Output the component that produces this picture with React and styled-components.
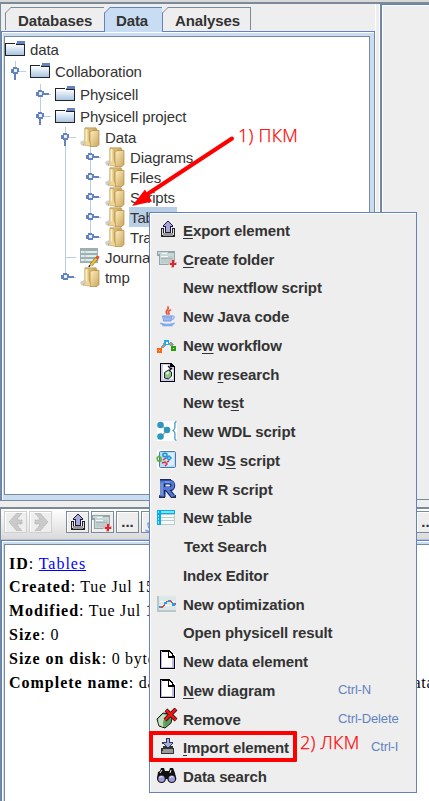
import React from "react";
import styled, { createGlobalStyle } from "styled-components";

const slate = "#7a8a99";
const blue = "#6382bf";
const sky = "#c8ddf2";
const face = "#eeeeee";
const ink = "#333333";

const Global = createGlobalStyle`
  * { box-sizing: border-box; }
  body { margin: 0; overflow: hidden; }
`;

const Window = styled.div`
  position: relative;
  width: 429px;
  height: 801px;
  overflow: hidden;
  display: flex;
  flex-direction: column;
  background: ${face};
  color: ${ink};
  font-family: "Liberation Sans", Arial, sans-serif;
  font-size: 15px;
`;

const TopEdge = styled.div`
  flex: none;
  height: 4px;
  background: #d8d8d8;
  border-bottom: 2px solid ${slate};
`;

const Upper = styled.div`
  flex: none;
  height: 497px;
  display: flex;
`;

const LeftPane = styled.section`
  width: 375px;
  height: 497px;
  border-left: 1px solid ${slate};
  display: flex;
  flex-direction: column;
`;

const TabBar = styled.div`
  height: 28px;
  flex: none;
  display: flex;
  align-items: flex-start;
  padding: 3px 0 0 4px;
  border-bottom: 1px solid ${blue};
`;

const Tab = styled.div`
  position: relative;
  width: ${(p) => p.$w}px;
  height: ${(p) => (p.$active ? 25 : 23)}px;
  border: 1px solid ${(p) => (p.$active ? blue : slate)};
  border-bottom: 0;
  border-right-width: ${(p) => (p.$open ? 0 : 1)}px;
  border-left-width: ${(p) => (p.$joined ? 0 : 1)}px;
  background: ${(p) => (p.$active ? sky : face)};
  font-weight: bold;
  line-height: 25px;
  padding-left: ${(p) => p.$pad}px;
  letter-spacing: -0.1px;
  white-space: nowrap;
`;

const Corner = styled.svg`
  position: absolute;
  left: -1px;
  top: -1px;
`;

const TreeFrame = styled.div`
  flex: 1;
  border-left: 1px solid ${blue};
  border-right: 1px solid ${slate};
  border-bottom: 1px solid ${slate};
  background: ${sky};
  box-shadow: inset 1px 1px 0 #fff;
  padding: 4px 4px 5px 2px;
  display: flex;
`;

const Tree = styled.div`
  flex: 1;
  border: 1px solid ${slate};
  background: #fff;
  padding-top: 2px;
  letter-spacing: -0.12px;
  overflow: hidden;
`;

const TreeRow = styled.div`
  display: flex;
  align-items: flex-start;
  height: ${(p) => p.$h}px;
`;

const TreeIcon = styled.svg`
  flex: none;
  width: 20px;
  height: 20px;
  margin-right: 4px;
`;

const Guide = styled.svg`
  flex: none;
  width: 25px;
  height: 100%;
`;

const TreeLabel = styled.span`
  height: 20px;
  line-height: 17px;
  padding: 2px ${(p) => (p.$selected ? 4 : 1)}px 0 1px;
  white-space: nowrap;
  background: ${(p) => (p.$selected ? "#b8cfe5" : "transparent")};
`;

const Divider = styled.div`
  width: 5px;
  background: ${face};
  border-left: 1px solid #fff;
  border-right: 1px solid #fff;
`;

const RightPane = styled.section`
  flex: 1;
  height: 496px;
  border-left: 1px solid ${slate};
  border-bottom: 1px solid ${slate};
  box-shadow: inset 1px 1px 0 ${blue}, inset 2px 2px 0 #fff;
`;

const Lower = styled.section`
  flex: 1;
  margin-top: 6px;
  border-top: 2px solid ${slate};
  border-left: 1px solid ${slate};
  display: flex;
  flex-direction: column;
`;

const Toolbar = styled.div`
  flex: none;
  height: 31px;
  width: 460px;
  padding: 2px 0 0 3px;
  display: flex;
  gap: 2px;
  background: linear-gradient(#fff, #dadada);
  border-bottom: 1px solid #b8c4d0;
`;

const ToolButton = styled.div`
  flex: none;
  width: 23px;
  height: 22px;
  margin-left: ${(p) => p.$gap || 0}px;
  border: 1px solid ${(p) => (p.$off ? "#cfcfcf" : slate)};
  background: ${face};
  box-shadow: inset 1px 1px 0 #fff;
  display: flex;
  align-items: center;
  justify-content: center;
  font-weight: bold;
  font-size: 15px;
  line-height: 20px;
`;

const InfoFrame = styled.div`
  flex: 1;
  width: 460px;
  border-left: 1px solid ${blue};
  border-top: 1px solid ${blue};
  background: ${sky};
  box-shadow: inset 1px 1px 0 #fff;
  padding: 3px 0 0 2px;
  display: flex;
`;

const Info = styled.div`
  flex: 1;
  border-left: 1px solid ${slate};
  border-top: 1px solid ${slate};
  background: #fff;
  padding: 6.5px 0 0 4px;
  font-family: "Liberation Serif", "Times New Roman", serif;
  font-size: 16px;
  letter-spacing: 0.74px;
  color: #000;
  b { letter-spacing: 0.98px; }
`;

const InfoLine = styled.div`
  height: 23.85px;
  line-height: 24px;
  white-space: nowrap;
`;

const Link = styled.span`
  color: #0000ff;
  text-decoration: underline;
  letter-spacing: 0.98px;
`;

const Menu = styled.div`
  position: absolute;
  left: 149px;
  top: 212px;
  width: 268px;
  height: 581px;
  border: 1px solid ${blue};
  background: ${face};
  box-shadow: inset 1px 1px 0 #fff;
  padding: 3px 0 0 6px;
`;

const MenuRow = styled.div`
  display: grid;
  grid-template-columns: 27px 155px 1fr;
  height: ${(p) => p.$h}px;
  line-height: 29px;
  font-weight: bold;
  white-space: nowrap;
  letter-spacing: -0.11px;
`;

const MenuIcon = styled.svg`
  width: 22px;
  height: 22px;
  margin-top: 3px;
`;

const MenuLabel = styled.span`
  padding-left: ${(p) => p.$shift || 0}px;
  u { text-underline-offset: 2px; text-decoration-thickness: 1px; text-decoration-skip-ink: none; }
`;

const Shortcut = styled.span`
  font-weight: normal;
  font-size: 13px;
  letter-spacing: -0.15px;
  line-height: 28px;
  color: ${blue};
  padding-left: ${(p) => p.$shift || 0}px;
`;

const Highlight = styled.div`
  position: absolute;
  left: 149px;
  top: 731px;
  width: 148px;
  height: 31px;
  border: 4px solid #ff0000;
  border-radius: 1px;
`;

const Note = styled.div`
  position: absolute;
  left: ${(p) => p.$x}px;
  top: ${(p) => p.$y}px;
  font-family: "Open Sans", "Noto Sans", sans-serif;
  font-weight: 300;
  font-size: 18px;
  line-height: 24px;
  letter-spacing: 0.25px;
  color: #ff0000;
  -webkit-text-stroke: 0.25px #ff0000;
  white-space: nowrap;
`;

const Arrow = styled.svg`
  position: absolute;
  left: 125px;
  top: 130px;
`;

/* ---- icons, drawn on a 22px grid ---- */

const UpTray = () => (
  <g shapeRendering="crispEdges">
    <path d="M5 9h3v6h8V9h3v9H5z" fill="#222" />
    <path d="M7 14h10v3H7z" fill="#999" />
    <path d="M6 10h1v6H6zM17 10h1v6h-1z" fill="#ddd" />
    <path d="M11 2h2v1h1v1h1v1h1v1h1v2h-2v6H9V8H7V6h1V5h1V4h1V3h1z" fill="#1b1b35" />
    <path d="M11 3h2v1h1v1h1v1h1v1h-2v6h-4V7H8V6h1V5h1V4h1z" fill="#a9a6dd" />
  </g>
);

const DownTray = () => (
  <g shapeRendering="crispEdges">
    <path d="M7 10h10v2h1v6H5v-6h2z" fill="#333" />
    <path d="M7 13h10v4H6v-2h1z" fill="#999" />
    <path d="M10 2h4v4h3v2h-1v1h-1v1h-1v1h-1v1h-2v-1h-1v-1H9V9H8V8H6V6h4z" fill="#34345a" />
    <path d="M11 3h2v4h3v1h-1v1h-1v1h-1v1h-2v-1h-1V9H9V8H8V7h3z" fill="#a5b0e0" />
  </g>
);

const FolderPlus = () => (
  <g shapeRendering="crispEdges">
    <path d="M1 3h18v14H3V8H1z" fill="#95a5a7" />
    <path d="M2 4h10v1h6v11H4V6H2z" fill="#c7d6d6" />
    <path d="M5 8h12v7H5z" fill="#bdcccc" />
    <path d="M6 5h5v1H6zM5 8h7v1H5z" fill="#f4fafa" />
    <path d="M5 10h11v1H5z" fill="#a3b5b5" />
    <path d="M15 11h3v3h3v3h-3v3h-3v-3h-3v-3h3z" fill="#e9b3b3" />
    <path d="M16 12h2v3h2v2h-2v2h-2v-2h-2v-2h2z" fill="#d62832" />
  </g>
);

const Java = () => (
  <g fill="none" strokeLinecap="round">
    <path d="M12 2c2 3-4 3-1 7M14.500 5c-3 1-2 3-1.500 4" stroke="#e75635" strokeWidth="1.700" />
    <path d="M7 11h9l-1 5H8z" fill="#9db9ee" stroke="#7399df" />
    <path d="M16 11c4-.5 2 4-1.500 3.500M9 12.500h5" stroke="#8fb1ec" strokeWidth="1.300" />
    <path d="M5 18.500c3 1.500 10 1.500 13 0M7 20.500h9" stroke="#83a8ec" strokeWidth="1.700" />
  </g>
);

const Workflow = () => (
  <g fill="none" shapeRendering="crispEdges">
    <path d="M6 14l3-4M14 9l3 3" stroke="#999" strokeWidth="3" />
    <path d="M8 6h5v5H8z" fill="#17aef0" />
    <path d="M10 8h2v2h-2z" fill="#fff" />
    <path d="M1 14h5v5H1z" fill="#ff6513" />
    <path d="M3 16h1v1H3z" fill="#fff" />
    <path d="M15 12h5v5h-5z" fill="#2b9c0c" />
    <path d="M17 14h1v1h-1z" fill="#fff" />
  </g>
);

const Page = () => (
  <g shapeRendering="crispEdges">
    <path d="M4 0h12v20H4zM16 4h4v16h-4z" fill="#fff" />
    <path d="M4 0h10v1h1v1h1v1h1v2h1v1h1v13H4z" fill="#000" />
    <path d="M6 2h6v6h5v9H6z" fill="#fff" />
    <path d="M13 2h1v1h1v1h1v2h-3z" fill="#fff" />
    <path d="M5 1h1v17H5zM16 8h2v10H5v-1h11z" fill="#bbbbf0" />
  </g>
);

const Research = () => (
  <g>
    <g shapeRendering="crispEdges">
      <path d="M4 0h11l4 4v15H4z" fill="#000" />
      <path d="M5 1h9v3h4v14H5z" fill="#ccccf5" />
      <path d="M7 2h6v5h4v9H7z" fill="#fff" />
    </g>
    <path d="M8.500 9.500l4-2.500 3 2v4l-3 3-4-1z" fill="#8fc480" stroke="#223" strokeWidth="1" />
    <path d="M9.500 10l3-2 1 1-2 3z" fill="#dcefd6" />
    <path d="M12 3l3 3M16 5l-3 3" stroke="#111" strokeWidth="1.200" />
  </g>
);

const Wdl = () => (
  <g>
    <path d="M1 1h20v20H1z" fill="#fff" />
    <path d="M5 5l6 5-6 7" fill="none" stroke="#aab" strokeWidth="1.300" />
    <circle cx="4.500" cy="5" r="3.300" fill="#2e98bc" />
    <circle cx="11" cy="10" r="3.300" fill="#2e98bc" />
    <circle cx="4.500" cy="16.500" r="3.300" fill="#2e98bc" />
    <path d="M20.500 1.500c-3 .5-1 4-1.700 6.500-.2 1.500-1.300 2-1.800 2.500.5.500 1.600 1 1.800 2.500.7 3-1.300 7 1.700 7.500" fill="none" stroke="#4b9dc0" strokeWidth="1.300" />
  </g>
);

const Js = () => (
  <g>
    <path d="M1 1h19v19H1z" fill="#fff" />
    <rect x="3.500" y="2.500" width="16" height="16" rx="1" fill="#b7dcf6" stroke="#4d7ba8" />
    <path d="M11 4h7v12l-7 1z" fill="#d9edfb" />
    <g fill="none" strokeWidth="1.500">
      <path d="M7 5l2-1 2 1v2L9 8 7 7zM11 9l2-2 2 2-2 2z" stroke="#1d96d8" />
      <path d="M7 11l3-2M6 14l3-1 2 2-2 2M11 13l2-1" stroke="#de3140" />
      <path d="M1 9l2-2 2 2v3H2z" stroke="#5aaa32" />
    </g>
  </g>
);

const RLetter = () => (
  <g fill="none">
    <path d="M4 2.500h11M3 18.500h6M15 18.500h5" stroke="#252d48" strokeWidth="3" />
    <path d="M7 3v16M5 4h8c5 0 5 7 0 7H7M11 11l6 7.500" stroke="#172763" strokeWidth="5" />
    <path d="M3.500 17.500h5M15 17.500h4" stroke="#517adb" strokeWidth="1.500" />
    <path d="M6.500 3.500v15M4 4h10c4 0 4 6.500 0 6.500H8M11 11l6 7.500" stroke="#517adb" strokeWidth="2.800" />
    <path d="M6 5v12M9 4h5" stroke="#8aacf0" strokeWidth="1" />
  </g>
);

const TableIcon = () => (
  <g shapeRendering="crispEdges">
    <path d="M1 4h18v15H1z" fill="#bccaca" />
    <path d="M5 9h13v2H5zM5 12h13v2H5zM5 15h13v3H5z" fill="#f2fafa" />
    <path d="M1 4h18v4H5v11H1z" fill="#08a9ed" />
    <path d="M2 5h1v2H2zM5 5h13v2H5zM2 9h1v2H2zM2 12h1v2H2zM2 15h1v3H2z" fill="#7be5ff" />
  </g>
);

const ChartIcon = () => (
  <g shapeRendering="crispEdges">
    <path d="M1 3h19v16H1z" fill="#dce8e8" />
    <path d="M1 3h2v14h17v2H1z" fill="#b8c6c8" />
    <path d="M4 8h15M4 12h15" stroke="#f7fafa" />
    <path d="M3 14h4l3-5h1l3-2 3 4h3" fill="none" stroke="#e64242" strokeWidth="1.300" />
    <path d="M3 13h2v2H3zM8 9h3v2H8zM12 7h2v2h-2zM16 10h3v3h-3z" fill="#12a7ec" />
  </g>
);

const RemoveIcon = () => (
  <g>
    <path d="M1 11l6-6 6 1 3 4-1 5-6 5-6-2z" fill="#6fae6c" stroke="#111" strokeWidth="1" />
    <path d="M2 11l5-5 4 2-4 5v6l-4-2z" fill="#c5e0c0" />
    <path d="M8 13l5-3 2 1-1 4-5 3z" fill="#5e9c5c" />
    <path d="M10 2l10 10M20 1L9 12" stroke="#111" strokeWidth="4" />
    <path d="M10 2l10 10M20 1L9 12" stroke="#f01414" strokeWidth="2.600" />
  </g>
);

const Binoculars = () => (
  <g>
    <path d="M5 3h3l1 3h4l1-3h3l2 5 1 6H1l1-7 2-1z" fill="#111" />
    <circle cx="5.500" cy="13.500" r="4.500" fill="#111" />
    <circle cx="15.800" cy="13.500" r="4.500" fill="#111" />
    <circle cx="5.500" cy="13.800" r="3.200" fill="#9c9cdc" />
    <circle cx="15.800" cy="13.800" r="3.200" fill="#9c9cdc" />
    <path d="M3.500 13a2 2 0 0 1 3-1M14 13a2 2 0 0 1 3-1M4 8l2-3M14 8l1-3" stroke="#eee" fill="none" />
  </g>
);

const BlueFolder = () => (
  <g shapeRendering="crispEdges">
    <defs>
      <linearGradient id="folderFill" x1="0" y1="0" x2="0" y2="1">
        <stop offset="0" stopColor="#f7fafd" />
        <stop offset="1" stopColor="#a0c0de" />
      </linearGradient>
    </defs>
    <path d="M1 6h18v11H1z" fill="url(#folderFill)" />
    <path d="M0 4h10v1H1v12H0zM0 16h20v1H0zM19 6h1v11h-1z" fill="#222" />
    <path d="M12 2h8v4h-9V4h1z" fill="#6382bf" />
    <path d="M11 5h9v1h-9z" fill="#222" />
  </g>
);

const GoldFolder = () => (
  <g>
    <defs>
      <linearGradient id="goldBack" x1="0" y1="0" x2="1" y2="0">
        <stop offset="0" stopColor="#e9cf8c" />
        <stop offset="1" stopColor="#c9a356" />
      </linearGradient>
      <linearGradient id="goldFront" x1="0" y1="0" x2="1" y2="1">
        <stop offset="0" stopColor="#fbefc4" />
        <stop offset="1" stopColor="#cfa558" />
      </linearGradient>
    </defs>
    <path d="M0 15l4-2v6l-3-1z" fill="#cfcfcf" />
    <path d="M5 0.800h11l1 2v14H5z" fill="url(#goldBack)" stroke="#b18b43" strokeWidth="0.600" />
    <path d="M10 5.500l2-2h7v14l-2 2h-7z" fill="url(#goldFront)" stroke="#a47b32" strokeWidth="0.600" />
    <path d="M5 1l4 1v11l2 6.300-8-1.300 2-2.500z" fill="#edd697" stroke="#b08a42" strokeWidth="0.500" />
    <path d="M6.200 2.500v12" stroke="#fff5cb" strokeWidth="1.200" />
  </g>
);

const JournalIcon = () => (
  <g>
    <path d="M0 1h18v15H0z" fill="#9eafaf" />
    <path d="M1 5h16M1 9h16M1 13h12" stroke="#dfecec" strokeWidth="2.200" />
    <path d="M5 2v13" stroke="#a7bcbc" />
    <path d="M11 18l6-7" stroke="#73581b" strokeWidth="3.300" />
    <path d="M11 18l6-7" stroke="#f3c32e" strokeWidth="2.300" />
    <path d="M16 10l3 1" stroke="#e25045" strokeWidth="3" />
    <path d="M9 20l1-2" stroke="#222" strokeWidth="1.500" />
  </g>
);

/* ---- tree ---- */

/* Guide kinds: "line" passes through, "open"/"closed" carry a handle, "tee" has a branch only */
function GuideCell({ kind, last }) {
  return (
    <Guide shapeRendering="crispEdges">
      {kind !== "blank" && <line x1="10.5" x2="10.5" y1="0" y2={last ? 12 : "100%"} stroke="#b8cfe5" />}
      {(kind === "open" || kind === "closed" || kind === "tee") && (
        <line x1="11" x2="21" y1="10.5" y2="10.5" stroke="#b8cfe5" />
      )}
      {kind === "open" && <rect x="9" y="12" width="2" height="7" fill={blue} />}
      {kind === "closed" && <rect x="12" y="9" width="7" height="2" fill={blue} />}
      {(kind === "open" || kind === "closed") && (
        <g>
          <path d="M8 6h4v1h2v4h-1v2H8v-1H6V8h2z" fill={blue} />
          <rect x="9" y="8" width="3" height="3" fill="#e6f0fb" />
        </g>
      )}
    </Guide>
  );
}

const tree = [
  { t: "data", h: 22, g: [], icon: BlueFolder },
  { t: "Collaboration", h: 23, g: ["open"], last: true, icon: BlueFolder },
  { t: "Physicell", h: 22, g: ["blank", "closed"], icon: BlueFolder },
  { t: "Physicell project", h: 21, g: ["blank", "open"], last: true, icon: BlueFolder },
  { t: "Data", h: 20, g: ["blank", "blank", "open"], icon: GoldFolder },
  { t: "Diagrams", h: 20, g: ["blank", "blank", "line", "closed"], icon: GoldFolder },
  { t: "Files", h: 20, g: ["blank", "blank", "line", "closed"], icon: GoldFolder },
  { t: "Scripts", h: 20, g: ["blank", "blank", "line", "closed"], icon: GoldFolder },
  { t: "Tables", h: 20, g: ["blank", "blank", "line", "closed"], icon: GoldFolder, selected: true },
  { t: "Tracks", h: 20, g: ["blank", "blank", "line", "closed"], last: true, icon: GoldFolder },
  { t: "Journal", h: 20, g: ["blank", "blank", "tee"], icon: JournalIcon },
  { t: "tmp", h: 20, g: ["blank", "blank", "closed"], last: true, icon: GoldFolder },
];

/* ---- context menu ---- */

const items = [
  { t: ["", "E", "xport element"], h: 29, icon: UpTray },
  { t: ["", "C", "reate folder"], h: 28, icon: FolderPlus },
  { t: ["New nextflow script"], h: 29 },
  { t: ["New Java code"], h: 29, icon: Java },
  { t: ["Ne", "w", " workflow"], h: 29, icon: Workflow },
  { t: ["New ", "r", "esearch"], h: 28, icon: Research },
  { t: ["New te", "s", "t"], h: 29 },
  { t: ["New WDL script"], h: 29, icon: Wdl },
  { t: ["New J", "S", " script"], h: 29, icon: Js },
  { t: ["New R script"], h: 28, icon: RLetter },
  { t: ["New ", "t", "able"], h: 29, icon: TableIcon },
  { t: ["Text Search"], h: 29, shift: 1 },
  { t: ["Index Editor"], h: 29 },
  { t: ["New optimization"], h: 28, icon: ChartIcon },
  { t: ["Open physicell result"], h: 29 },
  { t: ["New data element"], h: 29, icon: Page },
  { t: ["", "N", "ew diagram"], h: 29, icon: Page, key: "Ctrl-N" },
  { t: ["Remove"], h: 28, icon: RemoveIcon, key: "Ctrl-Delete" },
  { t: ["", "I", "mport element"], h: 29, icon: DownTray, key: "Ctrl-I", keyShift: 33 },
  { t: ["Data search"], h: 29, icon: Binoculars },
];

const details = [
  ["Created", "Tue Jul 15"],
  ["Modified", "Tue Jul 15"],
  ["Size", "0"],
  ["Size on disk", "0 bytes"],
  ["Complete name", "data/Collaboration/Physicell project/Data/Tables"],
];

function TabCorner({ color }) {
  return (
    <Corner width="6" height="6">
      <path d="M0 0h6L0 6z" fill={face} />
      <path d="M0.500 6L6 0.500" stroke={color} fill="none" />
    </Corner>
  );
}

function NavArrow({ flip }) {
  return (
    <svg width="18" height="18" viewBox="0 0 18 18">
      <path
        d={flip ? "M3 0h5l8 9-8 9H3l4-5 1-2H3V7h5L7 5z" : "M15 0h-5L2 9l8 9h5l-4-5-1-2h5V7h-5l1-2z"}
        fill="#cacaca"
        stroke="#adadad"
        strokeWidth="0.8"
        strokeDasharray="2 1"
      />
    </svg>
  );
}

const ToolIcon = ({ icon: Icon }) => (
  <svg width="21" height="20" viewBox="1 0 21 20">
    <Icon />
  </svg>
);

export default function App() {
  return (
    <Window>
      <Global />
      <TopEdge />
      <Upper>
        <LeftPane>
          <TabBar>
            <Tab $w={99} $pad={12} $open>
              <TabCorner color={slate} />
              Databases
            </Tab>
            <Tab $w={59} $pad={11} $active>
              <TabCorner color={blue} />
              Data
            </Tab>
            <Tab $w={88} $pad={12} $joined>
              <TabCorner color={slate} />
              Analyses
            </Tab>
          </TabBar>
          <TreeFrame>
            <Tree>
              {tree.map(({ t, h, g, last, icon: Icon, selected }) => (
                <TreeRow key={t} $h={h}>
                  {g.map((kind, i) => (
                    <GuideCell key={i} kind={kind} last={last && i === g.length - 1} />
                  ))}
                  <TreeIcon>
                    <Icon />
                  </TreeIcon>
                  <TreeLabel $selected={selected}>{t}</TreeLabel>
                </TreeRow>
              ))}
            </Tree>
          </TreeFrame>
        </LeftPane>
        <Divider />
        <RightPane />
      </Upper>
      <Lower>
        <Toolbar>
          <ToolButton $off>
            <NavArrow />
          </ToolButton>
          <ToolButton $off>
            <NavArrow flip />
          </ToolButton>
          <ToolButton $gap={12}>
            <ToolIcon icon={UpTray} />
          </ToolButton>
          <ToolButton>
            <ToolIcon icon={FolderPlus} />
          </ToolButton>
          <ToolButton>...</ToolButton>
          <ToolButton>
            <ToolIcon icon={Java} />
          </ToolButton>
          {Array.from({ length: 10 }, (_, i) => (
            <ToolButton key={i} />
          ))}
          <ToolButton>...</ToolButton>
        </Toolbar>
        <InfoFrame>
          <Info>
            <InfoLine>
              <b>ID</b>: <Link>Tables</Link>
            </InfoLine>
            {details.map(([name, value]) => (
              <InfoLine key={name}>
                <b>{name}</b>: {value}
              </InfoLine>
            ))}
          </Info>
        </InfoFrame>
      </Lower>

      <Menu>
        {items.map(({ t, h, icon: Icon, shift, key, keyShift }) => (
          <MenuRow key={t.join("")} $h={h}>
            <MenuIcon>{Icon && <Icon />}</MenuIcon>
            <MenuLabel $shift={shift}>
              {t[0]}
              {t[1] && <u>{t[1]}</u>}
              {t[2]}
            </MenuLabel>
            {key && <Shortcut $shift={keyShift}>{key}</Shortcut>}
          </MenuRow>
        ))}
      </Menu>

      <Arrow width="112" height="80">
        <path d="M107 8.500L18 67" stroke="#ff0000" strokeWidth="4" strokeLinecap="round" />
        <path d="M7 76L20 59.500L27 71.500z" fill="#ff0000" />
      </Arrow>
      <Note $x={238} $y={123}>1) ПКМ</Note>
      <Highlight />
      <Note $x={300} $y={730}>2) ЛКМ</Note>
    </Window>
  );
}
